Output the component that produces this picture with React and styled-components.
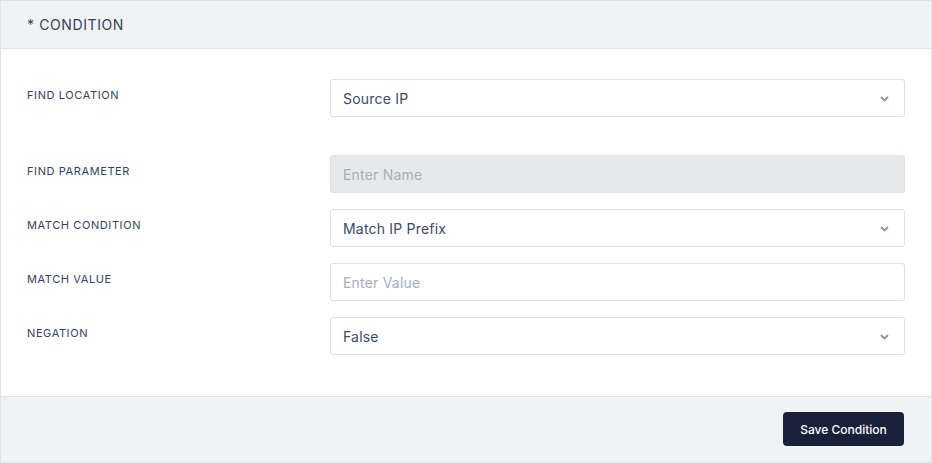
import React from 'react';
import styled, { createGlobalStyle } from 'styled-components';

const GlobalStyle = createGlobalStyle`
  html, body {
    margin: 0;
    padding: 0;
    background: #ffffff;
  }
  body {
    font-family: Inter, "Noto Sans", sans-serif;
  }
`;

const rows = [
  { label: 'FIND LOCATION', type: 'select', value: 'Source IP', spaced: true },
  { label: 'FIND PARAMETER', type: 'disabled', placeholder: 'Enter Name' },
  { label: 'MATCH CONDITION', type: 'select', value: 'Match IP Prefix' },
  { label: 'MATCH VALUE', type: 'input', placeholder: 'Enter Value' },
  { label: 'NEGATION', type: 'select', value: 'False' },
];

const Chevron = () => (
  <svg width="9" height="6" viewBox="0 0 9 6">
    <path d="M1 1l3.5 3.5L8 1" fill="none" stroke="#8e949b" strokeWidth="1.8" />
  </svg>
);

const App = () => {
  return (
    <>
      <GlobalStyle />
      <Card>
        <Header>* CONDITION</Header>
        <Body>
          {rows.map((row) => (
            <Row key={row.label} $spaced={row.spaced}>
              <Label>{row.label}</Label>
              <Field>
                {row.type === 'select' && (
                  <Control>
                    <span>{row.value}</span>
                    <Chevron />
                  </Control>
                )}
                {row.type === 'disabled' && (
                  <Control $disabled>
                    <Placeholder>{row.placeholder}</Placeholder>
                  </Control>
                )}
                {row.type === 'input' && (
                  <Control>
                    <Placeholder>{row.placeholder}</Placeholder>
                  </Control>
                )}
              </Field>
            </Row>
          ))}
        </Body>
        <Footer>
          <SaveButton>Save Condition</SaveButton>
        </Footer>
      </Card>
    </>
  );
};

export default App;

const Card = styled.div`
  width: 932px;
  height: 463px;
  box-sizing: border-box;
  border: 1px solid #dfe2e6;
  display: flex;
  flex-direction: column;
`;

const Header = styled.div`
  height: 48px;
  box-sizing: border-box;
  background: #f1f2f3;
  border-bottom: 1px solid #dfe2e6;
  padding: 0 26px;
  display: flex;
  align-items: center;
  font-size: 14px;
  letter-spacing: 0.6px;
  color: #34425e;
  font-weight: 400;
`;

const Body = styled.div`
  flex: 1;
  padding: 30px 26px 0;
  display: flex;
  flex-direction: column;
  gap: 16px;
`;

const Row = styled.div`
  display: grid;
  grid-template-columns: 303px 1fr;
  align-items: start;
  margin-bottom: ${(p) => (p.$spaced ? '22px' : '0')};
`;

const Label = styled.div`
  padding-top: 9px;
  font-size: 11px;
  font-weight: 400;
  color: #34425e;
  letter-spacing: 0.6px;
`;

const Field = styled.div`
  width: 575px;
`;

const Control = styled.div`
  height: 38px;
  box-sizing: border-box;
  border: 1px solid #dcdfe3;
  border-radius: 3px;
  background: ${(p) => (p.$disabled ? '#e6e9ec' : '#ffffff')};
  padding: 1px 15px 0 12px;
  display: flex;
  align-items: center;
  justify-content: space-between;
  font-size: 14px;
  letter-spacing: 0.2px;
  color: #3b4a66;
`;

const Placeholder = styled.span`
  color: #a4afbe;
`;

const Footer = styled.div`
  height: 66px;
  box-sizing: border-box;
  background: #f1f2f3;
  border-top: 1px solid #dfe2e6;
  display: flex;
  align-items: center;
  justify-content: flex-end;
  padding: 0 27px 1px;
`;

const SaveButton = styled.button`
  width: 121px;
  height: 34px;
  border: none;
  border-radius: 4px;
  background: #19213a;
  color: #ffffff;
  font-family: Inter, "Noto Sans", sans-serif;
  font-size: 12px;
  font-weight: 500;
  cursor: pointer;
`;
